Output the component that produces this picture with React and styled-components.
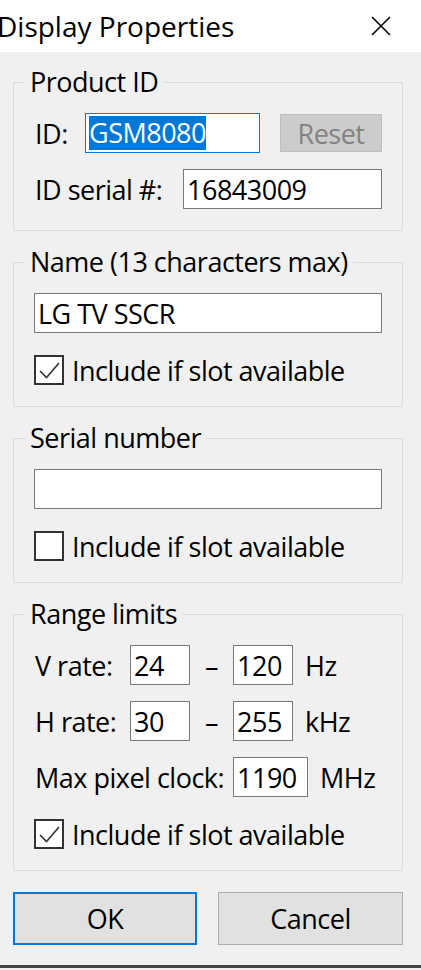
import React from "react"
import styled, { createGlobalStyle } from "styled-components"

const GlobalStyle = createGlobalStyle`
  html, body {
    margin: 0;
    padding: 0;
    background: #f0f0f0;
  }
  body {
    font-family: "Open Sans", "Noto Sans", sans-serif;
  }
`

const Dialog = styled.div`
  width: 421px;
  background: #f0f0f0;
  border-bottom: 3px solid #454545;
  overflow: hidden;
  font-size: 27px;
  letter-spacing: -0.5px;
  color: #000;
`

const TitleBar = styled.div`
  height: 52px;
  background: #fff;
  display: flex;
  align-items: center;
  justify-content: space-between;
  padding-right: 30px;
`

const Title = styled.div`
  margin-left: -3px;
  font-size: 28px;
  letter-spacing: 0;
  line-height: 36px;
`

const Close = styled.svg`
  width: 20px;
  height: 20px;
  display: block;
`

const Body = styled.div`
  padding: 12px 18px 20px 13px;
  display: flex;
  flex-direction: column;
  gap: 13px;
`

const Group = styled.fieldset`
  margin: 0;
  min-width: 0;
  border: 1px solid #dcdcdc;
  padding: 13px 20px 21px 20px;
`

const Legend = styled.legend`
  padding: 0 5px;
  margin-left: -9px;
  line-height: 36px;
`

const Rows = styled.div`
  display: flex;
  flex-direction: column;
  gap: 16px;
`

const Row = styled.div`
  display: flex;
  align-items: center;
  height: 40px;
`

const Label = styled.span`
  width: ${p => p.$w}px;
  flex: none;
  padding-left: 1px;
  box-sizing: border-box;
  white-space: nowrap;
`

const TextBox = styled.div`
  width: ${p => (p.$w ? p.$w + "px" : "100%")};
  flex: none;
  height: 40px;
  box-sizing: border-box;
  border: 1px solid ${p => (p.$focused ? "#0078d7" : "#7a7a7a")};
  background: #fff;
  padding-left: 3px;
  display: flex;
  align-items: center;
  white-space: nowrap;
`

const Selected = styled.span`
  background: #0078d7;
  color: #fff;
  line-height: 34px;
`

const ResetButton = styled.button`
  margin-left: 20px;
  width: 102px;
  height: 38px;
  background: #cccccc;
  border: 1px solid #bfbfbf;
  color: #838383;
  font: inherit;
  letter-spacing: inherit;
  padding: 0;
`

const Dash = styled.span`
  width: 43px;
  flex: none;
  text-align: center;
`

const Unit = styled.span`
  margin-left: 12px;
`

const CheckRow = styled.label`
  display: flex;
  align-items: center;
  height: 30px;
  margin-top: 6px;
`

const Box = styled.span`
  width: 30px;
  height: 30px;
  box-sizing: border-box;
  border: 2px solid #333;
  background: #fff;
  flex: none;
  display: flex;
`

const CheckText = styled.span`
  margin-left: 8px;
  white-space: nowrap;
`

const Buttons = styled.div`
  display: flex;
  justify-content: space-between;
  margin-top: 8px;
`

const Button = styled.button`
  width: ${p => p.$w}px;
  height: 53px;
  background: #e1e1e1;
  border: ${p => (p.$default ? "2px solid #0078d7" : "1px solid #adadad")};
  font: inherit;
  letter-spacing: inherit;
  color: #000;
  padding: 0;
`

function Checkbox({ checked, children }) {
  return (
    <CheckRow>
      <Box>
        {checked && (
          <svg width="26" height="26" viewBox="0 0 26 26">
            <polyline points="4,14 10.5,20.5 23,6" fill="none" stroke="#333" strokeWidth="1.6" />
          </svg>
        )}
      </Box>
      <CheckText>{children}</CheckText>
    </CheckRow>
  )
}

function App() {
  return (
    <>
      <GlobalStyle />
      <Dialog>
        <TitleBar>
          <Title>Display Properties</Title>
          <Close viewBox="0 0 20 20">
            <path d="M1 1 L19 19 M19 1 L1 19" stroke="#000" strokeWidth="1.6" />
          </Close>
        </TitleBar>

        <Body>
          <Group>
            <Legend>Product ID</Legend>
            <Rows>
              <Row>
                <Label $w={51}>ID:</Label>
                <TextBox $w={175} $focused>
                  <Selected>GSM8080</Selected>
                </TextBox>
                <ResetButton>Reset</ResetButton>
              </Row>
              <Row>
                <Label $w={149}>ID serial #:</Label>
                <TextBox $w={199}>16843009</TextBox>
              </Row>
            </Rows>
          </Group>

          <Group>
            <Legend>Name (13 characters max)</Legend>
            <Rows>
              <TextBox>LG TV SSCR</TextBox>
              <Checkbox checked>Include if slot available</Checkbox>
            </Rows>
          </Group>

          <Group>
            <Legend>Serial number</Legend>
            <Rows>
              <TextBox />
              <Checkbox>Include if slot available</Checkbox>
            </Rows>
          </Group>

          <Group>
            <Legend>Range limits</Legend>
            <Rows>
              <Row>
                <Label $w={96}>V rate:</Label>
                <TextBox $w={60}>24</TextBox>
                <Dash>–</Dash>
                <TextBox $w={60}>120</TextBox>
                <Unit>Hz</Unit>
              </Row>
              <Row>
                <Label $w={96}>H rate:</Label>
                <TextBox $w={60}>30</TextBox>
                <Dash>–</Dash>
                <TextBox $w={60}>255</TextBox>
                <Unit>kHz</Unit>
              </Row>
              <Row>
                <Label $w={199}>Max pixel clock:</Label>
                <TextBox $w={75}>1190</TextBox>
                <Unit>MHz</Unit>
              </Row>
              <Checkbox checked>Include if slot available</Checkbox>
            </Rows>
          </Group>

          <Buttons>
            <Button $w={184} $default>OK</Button>
            <Button $w={185}>Cancel</Button>
          </Buttons>
        </Body>
      </Dialog>
    </>
  )
}

export default App
